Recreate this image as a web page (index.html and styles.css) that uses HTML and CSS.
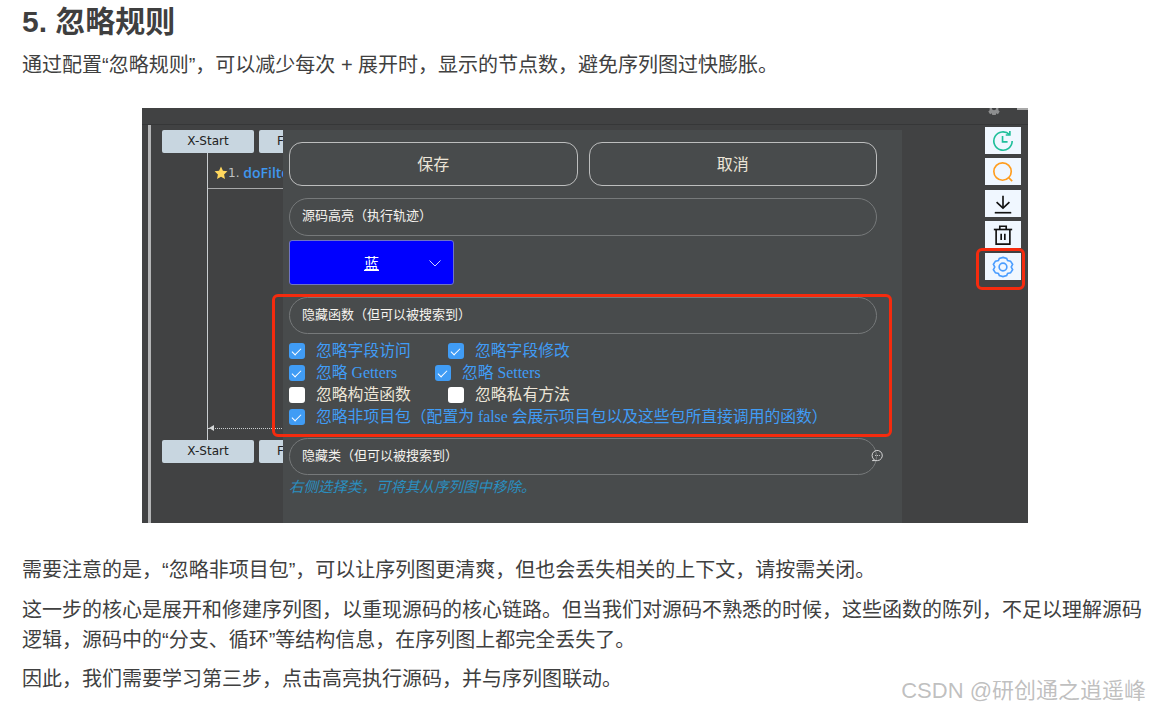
FILE: index.html
```html
<!DOCTYPE html>
<html lang="zh">
<head>
<meta charset="utf-8">
<title>忽略规则</title>
<link rel="stylesheet" href="styles.css">
</head>
<body>
<main class="article">
  <h2 class="title">5. 忽略规则</h2>
  <p class="intro">通过配置“忽略规则”，可以减少每次 + 展开时，显示的节点数，避免序列图过快膨胀。</p>
  <figure class="shot-wrap">
    <div class="shot">
      <div class="topbar">
        <svg class="top-gear" viewBox="0 0 16 16"><path d="M6 0h4l.5 2 2-1 2 3-1.500 1.500.0 5 1.500 1.500-2 3-2-1-.5 2H6l-.5-2-2 1-2-3L3 10.500v-5L1.500 4l2-3 2 1z" fill="#8d8e8f"/><circle cx="8" cy="8" r="2.500" fill="#404142"/></svg>
        <span class="top-tab"></span>
      </div>
      <div class="workspace">
        <div class="rail"></div>
        <div class="diagram">
          <div class="actors">
            <span class="actor">X-Start</span><span class="actor actor-clip">F</span>
          </div>
          <div class="lifeline">
            <div class="call"><svg class="star" viewBox="0 0 24 24"><path d="M12 1l3.300 7.200 7.700.9-5.700 5.300 1.500 7.800L12 18.300l-6.800 3.900 1.500-7.800L1 9.100l7.700-.9z" fill="#ffd75e"/></svg><span>1. </span><span class="method">doFilter</span></div>
            <div class="return"><span class="arrowhead"></span></div>
          </div>
          <div class="actors">
            <span class="actor">X-Start</span><span class="actor actor-clip">F</span>
          </div>
        </div>
        <div class="tools">
          <span class="tool"><svg viewBox="0 0 24 24" fill="none" stroke="#1fbf9a" stroke-width="1.800"><path d="M22 12a10 10 0 1 1-2.900-7"/><path d="M19.500 1v4.500H15"/><path d="M11.500 6.500V13H17"/></svg></span>
          <span class="tool"><svg viewBox="0 0 24 24" fill="none" stroke="#ff9d1e" stroke-width="1.800"><circle cx="11.500" cy="11.500" r="9.500"/><path d="M18.500 18.500l3.500 3.500"/></svg></span>
          <span class="tool"><svg viewBox="0 0 24 24" fill="none" stroke="#111" stroke-width="1.800"><path d="M12 3v13"/><path d="M5 10l7 6.500 7-6.500"/><path d="M3 21.500h18"/></svg></span>
          <span class="tool"><svg viewBox="0 0 24 24" fill="none" stroke="#111" stroke-width="1.800"><path d="M2 6h20"/><path d="M8.500 6V2.500h7V6"/><path d="M4.500 6v16h15V6"/><path d="M10 10.500v7M14 10.500v7"/></svg></span>
          <span class="tool"><svg viewBox="0 0 24 24" fill="none" stroke="#4a9dff" stroke-width="1.800"><path d="M12 1.500l4 1.200 1 2.300 3.200.6 2.300 3.400-1.500 3 1.500 3-2.300 3.400-3.200.6-1 2.300-4 1.200-4-1.200-1-2.300-3.200-.6-2.300-3.400 1.500-3-1.500-3 2.300-3.400 3.200-.6 1-2.300z"/><circle cx="12" cy="12" r="4.200"/></svg></span>
        </div>
      </div>

      <section class="modal">
        <div class="actions">
          <button class="btn">保存</button>
          <button class="btn">取消</button>
        </div>
        <div class="pill">源码高亮（执行轨迹）</div>
        <div class="select"><span>蓝</span><svg class="chevron" viewBox="0 0 12 7" fill="none" stroke="#cfd4ff"><path d="M.5.5L6 6l5.500-5.500"/></svg></div>
        <div class="pill pill-hide">隐藏函数（但可以被搜索到）</div>
        <div class="checks">
          <div class="row">
            <label class="check on w1"><i class="box"></i>忽略字段访问</label>
            <label class="check on"><i class="box"></i>忽略字段修改</label>
          </div>
          <div class="row">
            <label class="check on w2"><i class="box"></i>忽略 Getters</label>
            <label class="check on"><i class="box"></i>忽略 Setters</label>
          </div>
          <div class="row">
            <label class="check w1"><i class="box"></i>忽略构造函数</label>
            <label class="check"><i class="box"></i>忽略私有方法</label>
          </div>
          <div class="row">
            <label class="check on"><i class="box"></i>忽略非项目包（配置为 false 会展示项目包以及这些包所直接调用的函数）</label>
          </div>
        </div>
        <div class="pill pill-class">隐藏类（但可以被搜索到）
          <svg class="chat" viewBox="0 0 14 14" fill="none" stroke="#ddd"><path d="M3.500 11.500A5.500 5.500 0 1 1 7 12.500H1.500z"/><path d="M4.500 7h1M6.500 7h1M8.500 7h1" stroke-width="1"/></svg>
        </div>
        <p class="hint">右侧选择类，可将其从序列图中移除。</p>
      </section>

      <div class="mark mark-checks"></div>
      <div class="mark mark-gear"></div>
    </div>
  </figure>
  <p class="para p1">需要注意的是，“忽略非项目包”，可以让序列图更清爽，但也会丢失相关的上下文，请按需关闭。</p>
  <p class="para p2">这一步的核心是展开和修建序列图，以重现源码的核心链路。但当我们对源码不熟悉的时候，这些函数的陈列，不足以理解源码逻辑，源码中的“分支、循环”等结构信息，在序列图上都完全丢失了。</p>
  <p class="para p3">因此，我们需要学习第三步，点击高亮执行源码，并与序列图联动。</p>
</main>
<div class="watermark">CSDN @研创通之逍遥峰</div>
</body>
</html>
```

FILE: styles.css
```css
* { box-sizing: border-box; }
html, body { margin: 0; height: 100%; overflow: hidden; }
body {
  background: #fff;
  color: #333;
  font-family: "Liberation Sans", "Noto Sans CJK SC", sans-serif;
  position: relative;
}
.article { padding: 0 2px 0 22px; }
.title {
  margin: 0;
  font-size: 30px;
  line-height: 43px;
  font-weight: 700;
  color: #3f3f3f;
}
.intro {
  margin: 7px 0 0;
  font-size: 20px;
  line-height: 30px;
  color: #404040;
}
.shot-wrap { margin: 28px 0 0; display: flex; justify-content: center; }
.shot {
  position: relative;
  width: 886px;
  height: 415px;
  background: #414243;
  flex: none;
  overflow: hidden;
}
.topbar {
  height: 17px;
  border-bottom: 1px solid #363738;
  position: relative;
}
.top-gear { position: absolute; left: 845px; top: -7px; width: 14px; height: 14px; }
.top-tab { position: absolute; right: 0; top: 0; width: 11px; height: 2px; background: #a9a9a9; }
.workspace { display: flex; height: 398px; }
.rail { width: 3px; margin-left: 6px; background: #b4b5b6; flex: none; }
.diagram { width: 200px; margin-left: 11px; padding-top: 5px; flex: none; }
.actors { display: flex; gap: 5px; }
.actor {
  width: 92px;
  height: 23px;
  line-height: 23px;
  background: #c8d6e0;
  border-radius: 2px;
  color: #222;
  font-size: 12px;
  text-align: center;
  flex: none;
  font-family: "DejaVu Sans", sans-serif;
}
.actor-clip { width: 60px; text-align: left; padding-left: 18px; }
.lifeline {
  height: 287px;
  margin-left: 45px;
  border-left: 1px solid #c9cdd0;
  position: relative;
}
.call {
  height: 36px;
  padding: 4px 0 0 6px;
  border-bottom: 1px solid #a8a9aa;
  width: 200px;
  font-size: 12px;
  line-height: 18px;
  color: #bfc1c2;
  font-family: "DejaVu Sans", sans-serif;
  white-space: nowrap;
  display: flex;
  align-items: center;
}
.call span { white-space: pre; }
.star { width: 14px; height: 14px; flex: none; }
.method { color: #3f97ee; font: 600 14px "Open Sans", sans-serif; }
.return {
  position: absolute;
  left: 0;
  top: 275px;
  width: 200px;
  border-top: 1px dotted #c9cdd0;
}
.arrowhead {
  position: absolute;
  left: 1px;
  top: -4px;
  border: 3px solid transparent;
  border-right: 5px solid #d5d7d8;
  border-left: 0;
}
.tools {
  padding: 2px 0 0;
  position: absolute;
  left: 843px;
  top: 17px;
  display: flex;
  flex-direction: column;
  gap: 4px;
}
.tool {
  width: 36px;
  height: 27px;
  background: #f0f7ff;
  display: flex;
  align-items: center;
  justify-content: center;
}
.tool:nth-child(3), .tool:nth-child(5) { margin-top: 1px; }
.tool svg { width: 22px; height: 22px; }
.modal {
  position: absolute;
  left: 141px;
  top: 22px;
  width: 619px;
  height: 393px;
  background: #484b4c;
  padding: 12px 25px 0 6px;
}
.actions { display: flex; gap: 11px; }
.btn {
  flex: 1;
  height: 44px;
  padding: 0 0 2px;
  background: transparent;
  border: 1.500px solid #bdbebe;
  border-radius: 13px;
  color: #ece5d8;
  font: 16px "Noto Sans CJK SC", sans-serif;
}
.pill {
  position: relative;
  height: 38px;
  margin-top: 12px;
  padding-left: 12px;
  border: 1px solid #76797a;
  border-radius: 19px;
  color: #f6f4ef;
  font-size: 13px;
  line-height: 34px;
}
.select {
  margin-top: 4px;
  width: 165px;
  height: 45px;
  background: #0000ff;
  border: 1px solid #6f74c4;
  border-radius: 3px;
  display: flex;
  align-items: center;
  justify-content: center;
  color: #fff;
  font-size: 15px;
  position: relative;
}
.select span { text-decoration: underline; }
.chevron { position: absolute; right: 12px; top: 19px; width: 12px; height: 7px; }
.pill-hide { margin-top: 12px; height: 37px; }
.checks { margin-top: 6px; }
.row { display: flex; height: 22px; align-items: center; }
.check {
  display: flex;
  align-items: center;
  color: #ece5d8;
  font-size: 15.800px;
  line-height: 22px;
  white-space: nowrap;
  font-family: "Liberation Serif", "Noto Sans CJK SC", serif;
}
.check.on { color: #409cf5; }
.w1 { width: 159px; }
.w2 { width: 146px; }
.box {
  width: 16px;
  height: 16px;
  border-radius: 3px;
  background: #fff;
  margin-right: 11px;
  position: relative;
  flex: none;
}
.on .box { background: #409cf5; }
.on .box::after {
  content: "";
  position: absolute;
  left: 5px;
  top: 3px;
  width: 4px;
  height: 8px;
  border: solid #fff;
  border-width: 0 1.500px 1.500px 0;
  transform: rotate(45deg);
}
.pill-class { margin-top: 10px; height: 37px; }
.chat { position: absolute; right: -8px; top: 10px; width: 13px; height: 13px; }
.hint {
  margin: 2px 0 0;
  color: #2a8fc0;
  font-size: 14.500px;
  line-height: 20px;
  font-style: italic;
}
.mark {
  position: absolute;
  border: 3px solid #f52b0e;
  border-radius: 6px;
}
.mark-checks { left: 130px; top: 186px; width: 620px; height: 143px; }
.mark-gear { left: 834px; top: 140px; width: 49px; height: 42px; }
.para {
  margin: 0;
  font-size: 20px;
  line-height: 30px;
  color: #404040;
}
.p1 { margin-top: 32px; }
.p2 { margin-top: 10px; }
.p3 { margin-top: 9px; }
.watermark {
  position: absolute;
  right: 4px;
  bottom: 6px;
  font-size: 22px;
  line-height: 28px;
  color: rgba(150, 150, 150, 0.6);
}
```
